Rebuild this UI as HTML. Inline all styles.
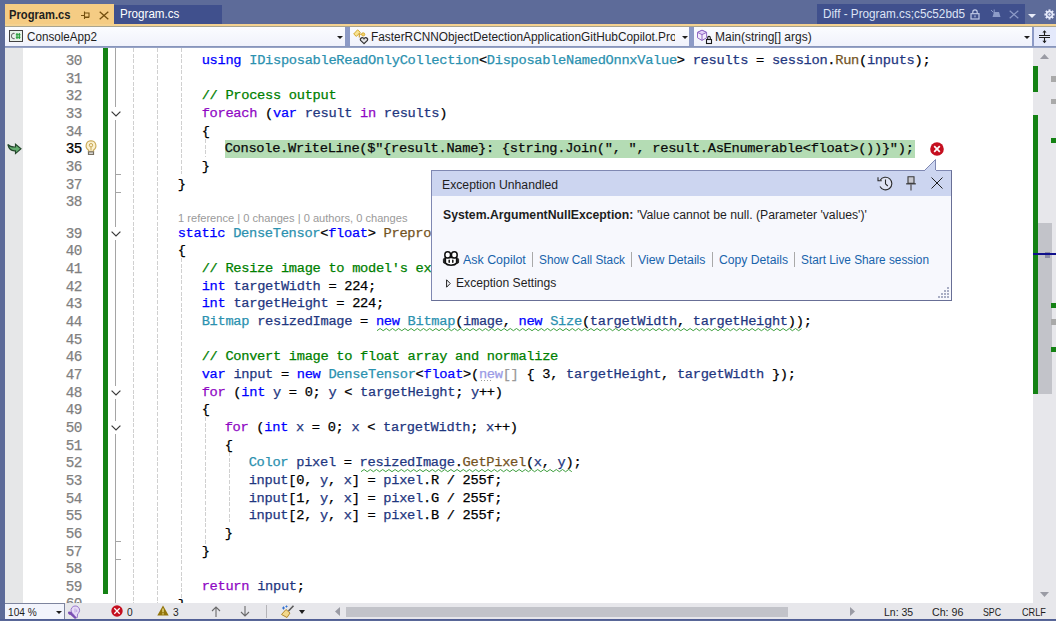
<!DOCTYPE html>
<html><head><meta charset="utf-8">
<style>
*{box-sizing:border-box;margin:0;padding:0}
html,body{width:1056px;height:621px;overflow:hidden}
body{background:#5d6b99;font-family:"Liberation Sans",sans-serif;font-size:12px;position:relative;color:#1e1e1e}
.abs{position:absolute}
svg{position:absolute;overflow:visible}
.tx{position:absolute;white-space:pre;transform-origin:0 50%;font-family:"Liberation Sans",sans-serif}
#tab1{left:5px;top:4px;width:109px;height:22px;background:#f5cc84}
#tab2{left:114px;top:5px;width:108px;height:19px;background:#40508d}
#tab3{left:817px;top:4px;width:208px;height:20px;background:#40508d}
#oline{left:5px;top:24px;width:1051px;height:2px;background:#f4d291}
#oline2{left:5px;top:26px;width:1051px;height:1px;background:#a9a48f}
#nav{left:5px;top:27px;width:1051px;height:21px;background:#8c9ac6}
.dd{position:absolute;top:0;height:19px;background:linear-gradient(#fbfcff,#f0f2fb)}
.ar{position:absolute;width:0;height:0;border-left:3px solid transparent;border-right:3px solid transparent;border-top:3.5px solid #1e1e1e}
#navbot{left:5px;top:46px;width:1051px;height:2px;background:linear-gradient(#7f8db5,#9fabcc)}
#editor{left:5px;top:48px;width:1028px;height:555px;background:#fff}
#margin{left:5px;top:48px;width:18px;height:555px;background:#e6e7e8}
#code{left:0;top:48px;width:1033px;height:555px;overflow:hidden}
#code>.in{position:absolute;left:0;top:-48px;width:1033px;height:621px}
.ln{position:absolute;left:39.4px;width:42.5px;letter-spacing:-0.5px;text-align:right;font-family:"Liberation Mono",monospace;font-size:14.3px;line-height:18px;height:18px;white-space:pre;-webkit-text-stroke:0.25px currentColor}
.cl{position:absolute;letter-spacing:-0.295px;font-family:"Liberation Mono",monospace;font-size:13.7px;line-height:17px;height:17px;white-space:pre}
.cl span{-webkit-text-stroke:0.25px currentColor}
.cl.hl{background:#b4e4b4}
#gbar{left:103px;top:48px;width:5px;height:546px;background:#148214}
.guide{position:absolute;width:1px;background:repeating-linear-gradient(180deg,#d0d0d0 0 4px,transparent 4px 5.6px)}
#oln{left:115px;top:48px;width:1px;height:555px;background:#a5a5a5}
.tick{position:absolute;left:115px;width:6px;height:1px;background:#a5a5a5}
.chev{position:absolute;left:109px;width:13px;height:13px;background:#fff}
#vs{left:1033px;top:48px;width:23px;height:555px;background:#e7e7eb}
#bot{left:5px;top:603px;width:1051px;height:16px;background:#e7e7eb}
#botline{left:0;top:619px;width:1056px;height:2px;background:linear-gradient(#4d5b94,#5d6b99)}
#popup{left:431px;top:170px;width:521px;height:131px;background:#f7f8fd;border:1px solid #7f88b2;border-right-color:#686f96;border-bottom-color:#686f96}
#popup .hd{position:absolute;left:0;top:0;width:519px;height:25px;background:#ccd5f0}
.sep{position:absolute;width:1px;height:15px;top:252px;background:#a9a9a9}
</style></head><body>
<!-- tabs -->
<div class="abs" id="tab1"></div>
<div class="abs" id="tab2"></div>
<div class="abs" id="tab3"></div>
<div class="abs" id="oline"></div>
<div class="abs" id="oline2"></div>
<!-- tab icons -->
<svg style="left:80px;top:10px" width="12" height="11" viewBox="0 0 12 11"><path d="M1 5.5H4.5M4.5 1.5V9M4.5 3H9V7H4.5M4.5 7.5H9" fill="none" stroke="#75500f" stroke-width="1.1"/></svg>
<svg style="left:99px;top:10.5px" width="10" height="9" viewBox="0 0 10 9"><path d="M0.7 0.7L9.3 8.3M9.3 0.7L0.7 8.3" fill="none" stroke="#75500f" stroke-width="1.3"/></svg>
<!-- tab3 icons: lock, pin, x -->
<svg style="left:969.6px;top:8.8px" width="10" height="11" viewBox="0 0 10 11"><path d="M2.8 4.6V3A2.2 2.2 0 0 1 7.2 3V4.6" fill="none" stroke="#c5cdea" stroke-width="1.15"/><rect x="1" y="4.7" width="8" height="5.3" fill="none" stroke="#c5cdea" stroke-width="1.15"/><rect x="4.5" y="6.4" width="1" height="1.9" fill="#c5cdea"/></svg>
<svg style="left:990px;top:9px" width="12" height="10" viewBox="0 0 12 10"><path d="M4 3H9L10.5 8H2.5Z" fill="#8d9bc8"/><path d="M1 1L3.5 3.5M4.2 0.5V3" stroke="#8d9bc8" stroke-width="1" fill="none"/></svg>
<svg style="left:1009px;top:9.5px" width="10" height="9" viewBox="0 0 10 9"><path d="M0.7 0.7L9.3 8.3M9.3 0.7L0.7 8.3" fill="none" stroke="#8d9bc8" stroke-width="1.2"/></svg>
<svg style="left:1028px;top:14px" width="8" height="4" viewBox="0 0 8 4"><path d="M0 0H8L4 4Z" fill="#e8ecf8"/></svg>
<svg style="left:1044.4px;top:8.5px" width="11" height="11" viewBox="-5.5 -5.5 11 11"><g fill="#e6eafb"><rect x="-1" y="-5.1" width="2" height="2.4" transform="rotate(0)"/><rect x="-1" y="-5.1" width="2" height="2.4" transform="rotate(45)"/><rect x="-1" y="-5.1" width="2" height="2.4" transform="rotate(90)"/><rect x="-1" y="-5.1" width="2" height="2.4" transform="rotate(135)"/><rect x="-1" y="-5.1" width="2" height="2.4" transform="rotate(180)"/><rect x="-1" y="-5.1" width="2" height="2.4" transform="rotate(225)"/><rect x="-1" y="-5.1" width="2" height="2.4" transform="rotate(270)"/><rect x="-1" y="-5.1" width="2" height="2.4" transform="rotate(315)"/><circle r="3.7"/></g><circle r="1.7" fill="none" stroke="#5d6b99" stroke-width="1"/></svg>
<!-- nav bar -->
<div class="abs" id="nav">
  <div class="dd" style="left:0;width:340px"><span class="ar" style="left:332px;top:9px"></span></div>
  <div class="dd" style="left:345px;width:339.3px"><span class="ar" style="left:676px;top:9px;left:332px"></span></div>
  <div class="dd" style="left:689px;width:338px"><span class="ar" style="left:330px;top:9px"></span></div>
  <div class="dd" style="left:1029px;width:22px;background:#e4e9fb"></div>
</div>
<div class="abs" id="navbot"></div>
<!-- nav icons -->
<svg style="left:9px;top:30px" width="14" height="12" viewBox="0 0 14 12"><rect x="0.5" y="0.5" width="13" height="11" fill="#e9f1ea" stroke="#424242"/><path d="M5.6 3.6A2.3 2.6 0 1 0 5.6 8.4" fill="none" stroke="#6f6f6f" stroke-width="1.1"/><path d="M8 3V9M10.3 3V9M6.8 4.7H11.5M6.8 7.3H11.5" stroke="#1e9a32" stroke-width="1.1" fill="none"/></svg>
<svg style="left:353px;top:28.6px" width="16" height="16" viewBox="0 0 16 16"><path d="M0.7 5L4.6 0.8L7.3 3.3L3.4 7.4Z" fill="#f8e391" stroke="#d5aa32" stroke-width="1"/><path d="M6.3 4.2V8.6" stroke="#c9952a" stroke-width="1.1" fill="none"/><path d="M6 5.2H9" stroke="#d5aa32" stroke-width="1.1" fill="none"/><circle cx="10.2" cy="5.4" r="1.6" fill="#f3d36b" stroke="#d5aa32" stroke-width="0.9"/><path d="M11 14.6L7.6 11.4A1.9 1.9 0 0 1 11 9.7A1.9 1.9 0 0 1 14.4 11.4Z" fill="#e4e4e8" stroke="#353535" stroke-width="1.2"/></svg>
<svg style="left:697px;top:29px" width="16" height="16" viewBox="0 0 16 16"><path d="M5 1.2L9.6 3.4V8.8L5 11.4L0.5 8.8V3.4Z" fill="#f3ecfb" stroke="#9069c4" stroke-width="1"/><path d="M0.5 3.4L5 5.6L9.6 3.4L5 1.2Z" fill="#e2d0f6" stroke="#9069c4" stroke-width="1"/><path d="M5 5.6V11.4" fill="none" stroke="#9069c4" stroke-width="1"/><rect x="9.5" y="10.5" width="5" height="4" fill="#f1f2fa" stroke="#1a1a1a" stroke-width="1.1"/><path d="M10.7 10.5V8.7A1.3 1.3 0 0 1 13.3 8.7V10.5" fill="none" stroke="#1a1a1a" stroke-width="1.1"/></svg>
<svg style="left:1039px;top:29px" width="11" height="15" viewBox="0 0 11 15"><path d="M0 6.5H11M0 8.5H11" stroke="#1e1e1e" stroke-width="1"/><path d="M5.5 2V6M5.5 9V13.5" stroke="#1e1e1e" stroke-width="1.1"/><path d="M3.4 3.6L5.5 1.2L7.6 3.6Z M3.4 11.8L5.5 14.2L7.6 11.8Z" fill="#1e1e1e"/></svg>
<!-- editor -->
<div class="abs" id="editor"></div>
<div class="abs" id="margin"></div>
<div class="abs" id="code"><div class="in">
<div class="abs" id="gbar"></div>
<div class="abs" id="oln"></div>
<div class="tick" style="top:174px"></div>
<div class="tick" style="top:192px"></div>
<div class="tick" style="top:541px"></div>
<div class="tick" style="top:559px"></div>
<div class="guide" style="left:133px;top:48px;height:556px"></div>
<div class="guide" style="left:157px;top:48px;height:556px"></div>
<div class="guide" style="left:181px;top:48px;height:126px"></div>
<div class="guide" style="left:205px;top:139px;height:18px"></div>
<div class="guide" style="left:181px;top:258px;height:340px"></div>
<div class="guide" style="left:205px;top:417px;height:139px"></div>
<div class="guide" style="left:229px;top:452px;height:70px"></div>
<div class="ln" style="top:52px;color:#808080">30</div>
<div class="cl" style="top:52px;left:201.7px"><span style="color:#0000ff">using</span><span style="color:#000000"> </span><span style="color:#2b91af">IDisposableReadOnlyCollection</span><span style="color:#000000">&lt;</span><span style="color:#2b91af">DisposableNamedOnnxValue</span><span style="color:#000000">&gt; </span><span style="color:#1f377f">results</span><span style="color:#000000"> = </span><span style="color:#1f377f">session</span><span style="color:#000000">.</span><span style="color:#74531f">Run</span><span style="color:#000000">(</span><span style="color:#1f377f">inputs</span><span style="color:#000000">);</span></div>
<div class="ln" style="top:70px;color:#808080">31</div>
<div class="ln" style="top:87px;color:#808080">32</div>
<div class="cl" style="top:87px;left:201.7px"><span style="color:#008000">// Process output</span></div>
<div class="ln" style="top:105px;color:#808080">33</div>
<div class="cl" style="top:105px;left:201.7px"><span style="color:#8f08c4">foreach</span><span style="color:#000000"> (</span><span style="color:#0000ff">var</span><span style="color:#000000"> </span><span style="color:#1f377f">result</span><span style="color:#000000"> </span><span style="color:#8f08c4">in</span><span style="color:#000000"> </span><span style="color:#1f377f">results</span><span style="color:#000000">)</span></div>
<div class="ln" style="top:123px;color:#808080">34</div>
<div class="cl" style="top:123px;left:201.7px"><span style="color:#000000">{</span></div>
<div class="ln" style="top:140px;color:#000">35</div>
<div class="abs" style="left:225px;top:140.00px;width:689.5px;height:17.76px;background:#b4dcb4"></div>
<div class="cl" style="top:140px;left:224.7px"><span style="color:#0a0a0a">Console.WriteLine($&quot;{result.Name}: {string.Join(&quot;, &quot;, result.AsEnumerable&lt;float&gt;())}&quot;);</span></div>
<div class="ln" style="top:158px;color:#808080">36</div>
<div class="cl" style="top:158px;left:201.7px"><span style="color:#000000">}</span></div>
<div class="ln" style="top:176px;color:#808080">37</div>
<div class="cl" style="top:176px;left:177.7px"><span style="color:#000000">}</span></div>
<div class="ln" style="top:193px;color:#808080">38</div>
<div class="ln" style="top:225px;color:#808080">39</div>
<div class="cl" style="top:225px;left:177.7px"><span style="color:#0000ff">static</span><span style="color:#000000"> </span><span style="color:#2b91af">DenseTensor</span><span style="color:#000000">&lt;</span><span style="color:#0000ff">float</span><span style="color:#000000">&gt; </span><span style="color:#74531f">PreprocessImage</span><span style="color:#000000">(</span><span style="color:#2b91af">Bitmap</span><span style="color:#000000"> </span><span style="color:#1f377f">image</span><span style="color:#000000">)</span></div>
<div class="ln" style="top:242px;color:#808080">40</div>
<div class="cl" style="top:242px;left:177.7px"><span style="color:#000000">{</span></div>
<div class="ln" style="top:260px;color:#808080">41</div>
<div class="cl" style="top:260px;left:201.7px"><span style="color:#008000">// Resize image to model&#x27;s expected input size</span></div>
<div class="ln" style="top:278px;color:#808080">42</div>
<div class="cl" style="top:278px;left:201.7px"><span style="color:#0000ff">int</span><span style="color:#000000"> </span><span style="color:#1f377f">targetWidth</span><span style="color:#000000"> = 224;</span></div>
<div class="ln" style="top:295px;color:#808080">43</div>
<div class="cl" style="top:295px;left:201.7px"><span style="color:#0000ff">int</span><span style="color:#000000"> </span><span style="color:#1f377f">targetHeight</span><span style="color:#000000"> = 224;</span></div>
<div class="ln" style="top:313px;color:#808080">44</div>
<div class="cl" style="top:313px;left:201.7px"><span style="color:#2b91af">Bitmap</span><span style="color:#000000"> </span><span style="color:#1f377f">resizedImage</span><span style="color:#000000"> = </span><span style="color:#0000ff">new</span><span style="color:#000000"> </span><span style="color:#2b91af">Bitmap</span><span style="color:#000000">(</span><span style="color:#1f377f">image</span><span style="color:#000000">, </span><span style="color:#0000ff">new</span><span style="color:#000000"> </span><span style="color:#2b91af">Size</span><span style="color:#000000">(</span><span style="color:#1f377f">targetWidth</span><span style="color:#000000">, </span><span style="color:#1f377f">targetHeight</span><span style="color:#000000">))</span><span style="color:#000000">;</span></div>
<div class="ln" style="top:331px;color:#808080">45</div>
<div class="ln" style="top:348px;color:#808080">46</div>
<div class="cl" style="top:348px;left:201.7px"><span style="color:#008000">// Convert image to float array and normalize</span></div>
<div class="ln" style="top:366px;color:#808080">47</div>
<div class="cl" style="top:366px;left:201.7px"><span style="color:#0000ff">var</span><span style="color:#000000"> </span><span style="color:#1f377f">input</span><span style="color:#000000"> = </span><span style="color:#0000ff">new</span><span style="color:#000000"> </span><span style="color:#2b91af">DenseTensor</span><span style="color:#000000">&lt;</span><span style="color:#0000ff">float</span><span style="color:#000000">&gt;(</span><span style="color:#9a9ae6">new</span><span style="color:#999999">[]</span><span style="color:#000000"> { 3, </span><span style="color:#1f377f">targetHeight</span><span style="color:#000000">, </span><span style="color:#1f377f">targetWidth</span><span style="color:#000000"> });</span></div>
<div class="ln" style="top:384px;color:#808080">48</div>
<div class="cl" style="top:384px;left:201.7px"><span style="color:#8f08c4">for</span><span style="color:#000000"> (</span><span style="color:#0000ff">int</span><span style="color:#000000"> </span><span style="color:#1f377f">y</span><span style="color:#000000"> = 0; </span><span style="color:#1f377f">y</span><span style="color:#000000"> &lt; </span><span style="color:#1f377f">targetHeight</span><span style="color:#000000">; </span><span style="color:#1f377f">y</span><span style="color:#000000">++)</span></div>
<div class="ln" style="top:401px;color:#808080">49</div>
<div class="cl" style="top:401px;left:201.7px"><span style="color:#000000">{</span></div>
<div class="ln" style="top:419px;color:#808080">50</div>
<div class="cl" style="top:419px;left:224.7px"><span style="color:#8f08c4">for</span><span style="color:#000000"> (</span><span style="color:#0000ff">int</span><span style="color:#000000"> </span><span style="color:#1f377f">x</span><span style="color:#000000"> = 0; </span><span style="color:#1f377f">x</span><span style="color:#000000"> &lt; </span><span style="color:#1f377f">targetWidth</span><span style="color:#000000">; </span><span style="color:#1f377f">x</span><span style="color:#000000">++)</span></div>
<div class="ln" style="top:437px;color:#808080">51</div>
<div class="cl" style="top:437px;left:224.7px"><span style="color:#000000">{</span></div>
<div class="ln" style="top:454px;color:#808080">52</div>
<div class="cl" style="top:454px;left:248.7px"><span style="color:#2b91af">Color</span><span style="color:#000000"> </span><span style="color:#1f377f">pixel</span><span style="color:#000000"> = </span><span style="color:#1f377f">resizedImage</span><span style="color:#000000">.</span><span style="color:#74531f">GetPixel</span><span style="color:#000000">(</span><span style="color:#1f377f">x</span><span style="color:#000000">, </span><span style="color:#1f377f">y</span><span style="color:#000000">)</span><span style="color:#000000">;</span></div>
<div class="ln" style="top:472px;color:#808080">53</div>
<div class="cl" style="top:472px;left:248.7px"><span style="color:#1f377f">input</span><span style="color:#000000">[0, </span><span style="color:#1f377f">y</span><span style="color:#000000">, </span><span style="color:#1f377f">x</span><span style="color:#000000">] = </span><span style="color:#1f377f">pixel</span><span style="color:#000000">.R / 255f;</span></div>
<div class="ln" style="top:490px;color:#808080">54</div>
<div class="cl" style="top:490px;left:248.7px"><span style="color:#1f377f">input</span><span style="color:#000000">[1, </span><span style="color:#1f377f">y</span><span style="color:#000000">, </span><span style="color:#1f377f">x</span><span style="color:#000000">] = </span><span style="color:#1f377f">pixel</span><span style="color:#000000">.G / 255f;</span></div>
<div class="ln" style="top:507px;color:#808080">55</div>
<div class="cl" style="top:507px;left:248.7px"><span style="color:#1f377f">input</span><span style="color:#000000">[2, </span><span style="color:#1f377f">y</span><span style="color:#000000">, </span><span style="color:#1f377f">x</span><span style="color:#000000">] = </span><span style="color:#1f377f">pixel</span><span style="color:#000000">.B / 255f;</span></div>
<div class="ln" style="top:525px;color:#808080">56</div>
<div class="cl" style="top:525px;left:224.7px"><span style="color:#000000">}</span></div>
<div class="ln" style="top:543px;color:#808080">57</div>
<div class="cl" style="top:543px;left:201.7px"><span style="color:#000000">}</span></div>
<div class="ln" style="top:560px;color:#808080">58</div>
<div class="ln" style="top:578px;color:#808080">59</div>
<div class="cl" style="top:578px;left:201.7px"><span style="color:#8f08c4">return</span><span style="color:#000000"> </span><span style="color:#1f377f">input</span><span style="color:#000000">;</span></div>
<div class="ln" style="top:595px;color:#808080">60</div>
<div class="cl" style="top:596px;left:177.7px"><span style="color:#000000">}</span></div>
<div class="abs" style="left:112px;top:106.7px;width:8px;height:13.4px;background:#fff"></div><svg style="left:110.5px;top:110.7px" width="10" height="6" viewBox="0 0 10 6"><path d="M0.6 0.6L5 5L9.4 0.6" fill="none" stroke="#3a3a3a" stroke-width="1.2"/></svg>
<div class="abs" style="left:112px;top:226.7px;width:8px;height:13.4px;background:#fff"></div><svg style="left:110.5px;top:230.7px" width="10" height="6" viewBox="0 0 10 6"><path d="M0.6 0.6L5 5L9.4 0.6" fill="none" stroke="#3a3a3a" stroke-width="1.2"/></svg>
<div class="abs" style="left:112px;top:385.7px;width:8px;height:13.4px;background:#fff"></div><svg style="left:110.5px;top:389.7px" width="10" height="6" viewBox="0 0 10 6"><path d="M0.6 0.6L5 5L9.4 0.6" fill="none" stroke="#3a3a3a" stroke-width="1.2"/></svg>
<div class="abs" style="left:112px;top:420.7px;width:8px;height:13.4px;background:#fff"></div><svg style="left:110.5px;top:424.7px" width="10" height="6" viewBox="0 0 10 6"><path d="M0.6 0.6L5 5L9.4 0.6" fill="none" stroke="#3a3a3a" stroke-width="1.2"/></svg>
<svg style="left:377.0px;top:327.5px" width="427" height="4"><path d="M0.0 2.7 L3.1 0.5 L6.2 2.7 L9.3 0.5 L12.4 2.7 L15.5 0.5 L18.6 2.7 L21.7 0.5 L24.8 2.7 L27.9 0.5 L31.0 2.7 L34.1 0.5 L37.2 2.7 L40.3 0.5 L43.4 2.7 L46.5 0.5 L49.6 2.7 L52.7 0.5 L55.8 2.7 L58.9 0.5 L62.0 2.7 L65.1 0.5 L68.2 2.7 L71.3 0.5 L74.4 2.7 L77.5 0.5 L80.6 2.7 L83.7 0.5 L86.8 2.7 L89.9 0.5 L93.0 2.7 L96.1 0.5 L99.2 2.7 L102.3 0.5 L105.4 2.7 L108.5 0.5 L111.6 2.7 L114.7 0.5 L117.8 2.7 L120.9 0.5 L124.0 2.7 L127.1 0.5 L130.2 2.7 L133.3 0.5 L136.4 2.7 L139.5 0.5 L142.6 2.7 L145.7 0.5 L148.8 2.7 L151.9 0.5 L155.0 2.7 L158.1 0.5 L161.2 2.7 L164.3 0.5 L167.4 2.7 L170.5 0.5 L173.6 2.7 L176.7 0.5 L179.8 2.7 L182.9 0.5 L186.0 2.7 L189.1 0.5 L192.2 2.7 L195.3 0.5 L198.4 2.7 L201.5 0.5 L204.6 2.7 L207.7 0.5 L210.8 2.7 L213.9 0.5 L217.0 2.7 L220.1 0.5 L223.2 2.7 L226.3 0.5 L229.4 2.7 L232.5 0.5 L235.6 2.7 L238.7 0.5 L241.8 2.7 L244.9 0.5 L248.0 2.7 L251.1 0.5 L254.2 2.7 L257.3 0.5 L260.4 2.7 L263.5 0.5 L266.6 2.7 L269.7 0.5 L272.8 2.7 L275.9 0.5 L279.0 2.7 L282.1 0.5 L285.2 2.7 L288.3 0.5 L291.4 2.7 L294.5 0.5 L297.6 2.7 L300.7 0.5 L303.8 2.7 L306.9 0.5 L310.0 2.7 L313.1 0.5 L316.2 2.7 L319.3 0.5 L322.4 2.7 L325.5 0.5 L328.6 2.7 L331.7 0.5 L334.8 2.7 L337.9 0.5 L341.0 2.7 L344.1 0.5 L347.2 2.7 L350.3 0.5 L353.4 2.7 L356.5 0.5 L359.6 2.7 L362.7 0.5 L365.8 2.7 L368.9 0.5 L372.0 2.7 L375.1 0.5 L378.2 2.7 L381.3 0.5 L384.4 2.7 L387.5 0.5 L390.6 2.7 L393.7 0.5 L396.8 2.7 L399.9 0.5 L403.0 2.7 L406.1 0.5 L409.2 2.7 L412.3 0.5 L415.4 2.7 L418.5 0.5 L421.6 2.7 L424.7 0.5" fill="none" stroke="#3f9f3f" stroke-width="1" stroke-linejoin="round"/></svg>
<div class="abs" style="left:480.9px;top:380.2px;width:1.4px;height:1.3px;background:#9a9a9a"></div><div class="abs" style="left:483.8px;top:380.2px;width:1.4px;height:1.3px;background:#9a9a9a"></div><div class="abs" style="left:486.7px;top:380.2px;width:1.4px;height:1.3px;background:#9a9a9a"></div><div class="abs" style="left:489.6px;top:380.2px;width:1.4px;height:1.3px;background:#9a9a9a"></div>
<svg style="left:360.6px;top:468.5px" width="213" height="4"><path d="M0.0 2.7 L3.1 0.5 L6.2 2.7 L9.3 0.5 L12.4 2.7 L15.5 0.5 L18.6 2.7 L21.7 0.5 L24.8 2.7 L27.9 0.5 L31.0 2.7 L34.1 0.5 L37.2 2.7 L40.3 0.5 L43.4 2.7 L46.5 0.5 L49.6 2.7 L52.7 0.5 L55.8 2.7 L58.9 0.5 L62.0 2.7 L65.1 0.5 L68.2 2.7 L71.3 0.5 L74.4 2.7 L77.5 0.5 L80.6 2.7 L83.7 0.5 L86.8 2.7 L89.9 0.5 L93.0 2.7 L96.1 0.5 L99.2 2.7 L102.3 0.5 L105.4 2.7 L108.5 0.5 L111.6 2.7 L114.7 0.5 L117.8 2.7 L120.9 0.5 L124.0 2.7 L127.1 0.5 L130.2 2.7 L133.3 0.5 L136.4 2.7 L139.5 0.5 L142.6 2.7 L145.7 0.5 L148.8 2.7 L151.9 0.5 L155.0 2.7 L158.1 0.5 L161.2 2.7 L164.3 0.5 L167.4 2.7 L170.5 0.5 L173.6 2.7 L176.7 0.5 L179.8 2.7 L182.9 0.5 L186.0 2.7 L189.1 0.5 L192.2 2.7 L195.3 0.5 L198.4 2.7 L201.5 0.5 L204.6 2.7 L207.7 0.5 L210.8 2.7" fill="none" stroke="#3f9f3f" stroke-width="1" stroke-linejoin="round"/></svg>
</div></div>
<!-- margin icons -->
<svg style="left:7px;top:143px" width="15" height="12" viewBox="0 0 15 12"><path d="M0.8 1.5C3 4 5 4.2 8.5 4V1.2L14 5.8L8.5 10.6V7.8C5 8.2 2.2 7 0.8 1.5Z" fill="#63ad6f" stroke="#24472b" stroke-width="1.15"/></svg>
<svg style="left:85px;top:140px" width="12" height="15" viewBox="0 0 12 15"><path d="M6 0.8A5 5 0 0 1 8.6 10V11.3H3.4V10A5 5 0 0 1 6 0.8Z" fill="#fbf0cf" stroke="#c9a956" stroke-width="1.1"/><circle cx="6" cy="5.2" r="1.7" fill="none" stroke="#c9a956" stroke-width="1"/><path d="M6 7V10" stroke="#c9a956" stroke-width="1"/><rect x="3.5" y="11.9" width="5" height="2.5" fill="#efefef" stroke="#777062" stroke-width="1.2"/></svg>
<!-- error icon -->
<svg style="left:930px;top:142px" width="14" height="14" viewBox="0 0 14 14"><circle cx="7" cy="7" r="6.8" fill="#c50f1f"/><path d="M4.2 4.2L9.8 9.8M9.8 4.2L4.2 9.8" stroke="#fff" stroke-width="1.7"/></svg>
<!-- vertical scrollbar -->
<div class="abs" id="vs"></div>
<div class="abs" style="left:1033px;top:66px;width:5px;height:26px;background:#148214"></div>
<div class="abs" style="left:1033px;top:115px;width:5px;height:279px;background:#148214"></div>
<div class="abs" style="left:1038px;top:223px;width:14px;height:171px;background:#c2c3c9"></div>
<div class="abs" style="left:1051px;top:76px;width:5px;height:6px;background:#a9a9a9"></div>
<div class="abs" style="left:1051px;top:99px;width:5px;height:5px;background:#a9a9a9"></div>
<div class="abs" style="left:1051px;top:138px;width:5px;height:5px;background:#148214"></div>
<div class="abs" style="left:1051px;top:303px;width:5px;height:5px;background:#148214"></div>
<div class="abs" style="left:1051px;top:319px;width:5px;height:6px;background:#a9a9a9"></div>
<div class="abs" style="left:1051px;top:347px;width:5px;height:5px;background:#148214"></div>
<div class="abs" style="left:1045px;top:252px;width:5px;height:6px;background:#8c8ca4"></div>
<div class="abs" style="left:1033px;top:253px;width:23px;height:2px;background:#10108c"></div>
<svg style="left:1040px;top:54px" width="9" height="5" viewBox="0 0 9 5"><path d="M0 5L4.5 0L9 5Z" fill="#9a9ba4"/></svg>
<svg style="left:1040px;top:592px" width="9" height="5" viewBox="0 0 9 5"><path d="M0 0L4.5 5L9 0Z" fill="#9a9ba4"/></svg>
<!-- status bar -->
<div class="abs" id="bot"></div>
<div class="abs" id="botline"></div>
<div class="abs" style="left:5px;top:603px;width:60px;height:16px;background:#f2f4fc;border-top:1px solid #7d849e;border-right:1px solid #7d849e"></div>
<span class="ar" style="left:56px;top:611px"></span>
<svg style="left:67px;top:604px" width="14" height="15" viewBox="0 0 14 15"><path d="M6.6 10.2A4.3 4.3 0 1 1 10.6 9.9L10.2 13.8H7.6Z" fill="#e7dbf6" stroke="#9a78cc" stroke-width="1"/><path d="M8 4.5V8.5M9.7 5.5V8" stroke="#b9a0de" stroke-width="0.9"/><path d="M2.6 8.6L8.2 13.6" stroke="#7b4fb3" stroke-width="2.2" stroke-linecap="round"/><path d="M1.4 7.6A1.9 1.9 0 1 0 4.2 7.3L3 8.9Z" fill="#7b4fb3"/></svg>
<svg style="left:110.5px;top:605.4px" width="12" height="12" viewBox="0 0 12 12"><circle cx="6" cy="6" r="5.7" fill="#c50f1f"/><path d="M3.3 3.3L8.7 8.7M8.7 3.3L3.3 8.7" stroke="#fff" stroke-width="1.25"/></svg>
<svg style="left:156.6px;top:605.4px" width="12" height="11" viewBox="0 0 12 11"><path d="M6 0.4L11.7 10.6H0.3Z" fill="#93750c"/><path d="M6 3.6V7.3M6 8.3V9.5" stroke="#fff6a8" stroke-width="1.1"/></svg>
<svg style="left:211px;top:606px" width="10" height="11" viewBox="0 0 10 11"><path d="M5 11V1M1 5L5 1L9 5" fill="none" stroke="#6b6b6b" stroke-width="1.1"/></svg>
<svg style="left:240px;top:606px" width="10" height="11" viewBox="0 0 10 11"><path d="M5 0V10M1 6L5 10L9 6" fill="none" stroke="#6b6b6b" stroke-width="1.1"/></svg>
<div class="abs" style="left:266px;top:605px;width:1px;height:13px;background:#b4b4b8"></div>
<svg style="left:280px;top:605px" width="15" height="13" viewBox="0 0 15 13"><path d="M13.5 0.8L8.5 6" stroke="#5a5a5a" stroke-width="1.6"/><path d="M6 4.5L10 8L7 12.5L1.5 9.5Z" fill="#f3d88c" stroke="#b68a2c" stroke-width="1"/><path d="M3.5 1.5V4.5M2 3H5M6.5 0.5V2.5M5.5 1.5H7.5" stroke="#2f6fd0" stroke-width="1"/></svg>
<span class="ar" style="left:299px;top:610px;border-left-width:3.5px;border-right-width:3.5px;border-top-width:4px"></span>
<svg style="left:335px;top:607px" width="5" height="9" viewBox="0 0 5 9"><path d="M5 0L0 4.5L5 9Z" fill="#9a9ba4"/></svg>
<svg style="left:850px;top:607px" width="5" height="9" viewBox="0 0 5 9"><path d="M0 0L5 4.5L0 9Z" fill="#9a9ba4"/></svg>
<div class="abs" style="left:346px;top:607px;width:442px;height:10px;background:#c2c3c9"></div>
<div class="tx" style="left:9.40px;top:6.57px;font-size:12.2px;line-height:16px;transform:scaleX(0.9176);color:#1e1e1e;font-weight:bold;">Program.cs</div>
<div class="tx" style="left:119.50px;top:6.34px;font-size:12.3px;line-height:16px;transform:scaleX(0.9447);color:#ffffff;">Program.cs</div>
<div class="tx" style="left:822.50px;top:6.14px;font-size:12.3px;line-height:16px;transform:scaleX(0.9544);color:#dde3f5;">Diff - Program.cs;c5c52bd5</div>
<div class="tx" style="left:26.70px;top:29.04px;font-size:12.3px;line-height:16px;transform:scaleX(0.9479);color:#1e1e1e;">ConsoleApp2</div>
<div class="abs" style="left:370px;top:27px;width:305px;height:19px;overflow:hidden"><div class="tx" style="left:0.50px;top:2.04px;font-size:12.3px;line-height:16px;transform:scaleX(0.9634);color:#1e1e1e;">FasterRCNNObjectDetectionApplicationGitHubCopilot.Program</div></div>
<div class="tx" style="left:714.50px;top:29.04px;font-size:12.3px;line-height:16px;transform:scaleX(0.9758);color:#1e1e1e;">Main(string[] args)</div>
<div class="tx" style="left:7.80px;top:604.88px;font-size:11.3px;line-height:15px;transform:scaleX(0.8958);color:#1e1e1e;">104 %</div>
<div class="tx" style="left:127.00px;top:604.88px;font-size:11.3px;line-height:15px;transform:scaleX(0.9000);color:#1e1e1e;">0</div>
<div class="tx" style="left:173.00px;top:604.88px;font-size:11.3px;line-height:15px;transform:scaleX(0.9000);color:#1e1e1e;">3</div>
<div class="tx" style="left:883.70px;top:604.98px;font-size:11.3px;line-height:15px;transform:scaleX(0.9263);color:#1e1e1e;">Ln: 35</div>
<div class="tx" style="left:931.60px;top:604.98px;font-size:11.3px;line-height:15px;transform:scaleX(0.9432);color:#1e1e1e;">Ch: 96</div>
<div class="tx" style="left:982.90px;top:604.98px;font-size:11.3px;line-height:15px;transform:scaleX(0.7790);color:#1e1e1e;">SPC</div>
<div class="tx" style="left:1021.90px;top:604.98px;font-size:11.3px;line-height:15px;transform:scaleX(0.8100);color:#1e1e1e;">CRLF</div>
<div class="tx" style="left:177.60px;top:211.22px;font-size:11.2px;line-height:15px;transform:scaleX(0.9935);color:#9a9a9a;">1 reference | 0 changes | 0 authors, 0 changes</div>
<!-- popup -->
<svg style="left:923px;top:158px" width="14" height="14" viewBox="0 0 14 14"><path d="M0.5 13.5L12.5 1.5V13.5" fill="#ccd5f0" stroke="#7f88b2" stroke-width="1"/></svg>
<div class="abs" id="popup"><div class="hd"></div></div>
<div class="abs" style="left:924.5px;top:170px;width:11.5px;height:2px;background:#ccd5f0"></div>
<div class="tx" style="left:442.30px;top:177.44px;font-size:12.0px;line-height:16px;transform:scaleX(1.0169);color:#1e1e1e;">Exception Unhandled</div>
<div class="tx" style="left:443.00px;top:207.14px;font-size:12.0px;line-height:16px;transform:scaleX(1.0193);color:#1e1e1e;font-weight:bold;">System.ArgumentNullException:</div>
<div class="tx" style="left:636.80px;top:207.14px;font-size:12.0px;line-height:16px;transform:scaleX(1.0181);color:#1e1e1e;">&#x27;Value cannot be null. (Parameter &#x27;values&#x27;)&#x27;</div>
<div class="tx" style="left:463.20px;top:252.34px;font-size:12.0px;line-height:16px;transform:scaleX(1.0348);color:#1763ab;">Ask Copilot</div>
<div class="tx" style="left:539.00px;top:252.34px;font-size:12.0px;line-height:16px;transform:scaleX(0.9843);color:#1763ab;">Show Call Stack</div>
<div class="tx" style="left:638.00px;top:252.34px;font-size:12.0px;line-height:16px;transform:scaleX(1.0258);color:#1763ab;">View Details</div>
<div class="tx" style="left:719.00px;top:252.34px;font-size:12.0px;line-height:16px;transform:scaleX(1.0143);color:#1763ab;">Copy Details</div>
<div class="tx" style="left:801.00px;top:252.34px;font-size:12.0px;line-height:16px;transform:scaleX(0.9842);color:#1763ab;">Start Live Share session</div>
<div class="tx" style="left:455.80px;top:274.94px;font-size:12.0px;line-height:16px;transform:scaleX(1.0102);color:#1e1e1e;">Exception Settings</div>
<div class="sep" style="left:532px"></div><div class="sep" style="left:631px"></div><div class="sep" style="left:712px"></div><div class="sep" style="left:794px"></div>
<!-- popup header icons -->
<svg style="left:877px;top:175px" width="17" height="17" viewBox="0 0 17 17"><path d="M3.2 5.2A6.3 6.3 0 1 1 3 11.5" fill="#dfe3f3" stroke="#2a2a2a" stroke-width="1.1"/><path d="M1 2.2V5.8H4.8" fill="none" stroke="#2a2a2a" stroke-width="1.1"/><path d="M8.5 4.5V8.8L10.8 11" fill="none" stroke="#2a2a2a" stroke-width="1.1"/></svg>
<svg style="left:905px;top:176px" width="12" height="15" viewBox="0 0 12 15"><path d="M3 0.8H9V7.3H3Z" fill="#c7c7cf" stroke="#3a3a3a" stroke-width="1.1"/><path d="M1.2 7.8H10.8" stroke="#3a3a3a" stroke-width="1.3"/><path d="M6 8V14.5" stroke="#6e6e78" stroke-width="1.6"/></svg>
<svg style="left:931px;top:177px" width="12" height="12" viewBox="0 0 12 12"><path d="M0.5 0.5L11.5 11.5M11.5 0.5L0.5 11.5" stroke="#1e1e1e" stroke-width="1"/></svg>
<!-- copilot icon -->
<svg style="left:443px;top:251.3px" width="16" height="15.5" viewBox="0 0 16 15.5"><path d="M0.4 8.4Q0.4 7.4 1.6 7.2V12.4Q0.4 12.2 0.4 11.2ZM15.6 8.4Q15.6 7.4 14.4 7.2V12.4Q15.6 12.2 15.6 11.2Z" fill="#111" stroke="#111" stroke-width="0.8"/><path d="M2.4 6.5V12C4.2 14.9 11.8 14.9 13.6 12V6.5Z" fill="#fff" stroke="#111" stroke-width="1.5" stroke-linejoin="round"/><ellipse cx="4.7" cy="3.9" rx="2.9" ry="3.1" fill="#fff" stroke="#111" stroke-width="1.5"/><ellipse cx="11.3" cy="3.9" rx="2.9" ry="3.1" fill="#fff" stroke="#111" stroke-width="1.5"/><path d="M7 3.2H9" stroke="#111" stroke-width="1.6"/><path d="M6.2 9.2V11.2M9.8 9.2V11.2" stroke="#111" stroke-width="1.5" stroke-linecap="round"/></svg>
<svg style="left:446px;top:279px" width="5" height="9" viewBox="0 0 5 9"><path d="M0.6 0.8L4.2 4.5L0.6 8.2Z" fill="none" stroke="#1e1e1e" stroke-width="1"/></svg>
<!-- resize grip -->
<svg style="left:937.2px;top:286.1px" width="13" height="13" viewBox="0 0 13 13"><g fill="#a9aec4"><rect x="10" y="1" width="2" height="2"/><rect x="7" y="4" width="2" height="2"/><rect x="10" y="4" width="2" height="2"/><rect x="4" y="7" width="2" height="2"/><rect x="7" y="7" width="2" height="2"/><rect x="10" y="7" width="2" height="2"/><rect x="1" y="10" width="2" height="2"/><rect x="4" y="10" width="2" height="2"/><rect x="7" y="10" width="2" height="2"/><rect x="10" y="10" width="2" height="2"/></g></svg>
</body></html>
